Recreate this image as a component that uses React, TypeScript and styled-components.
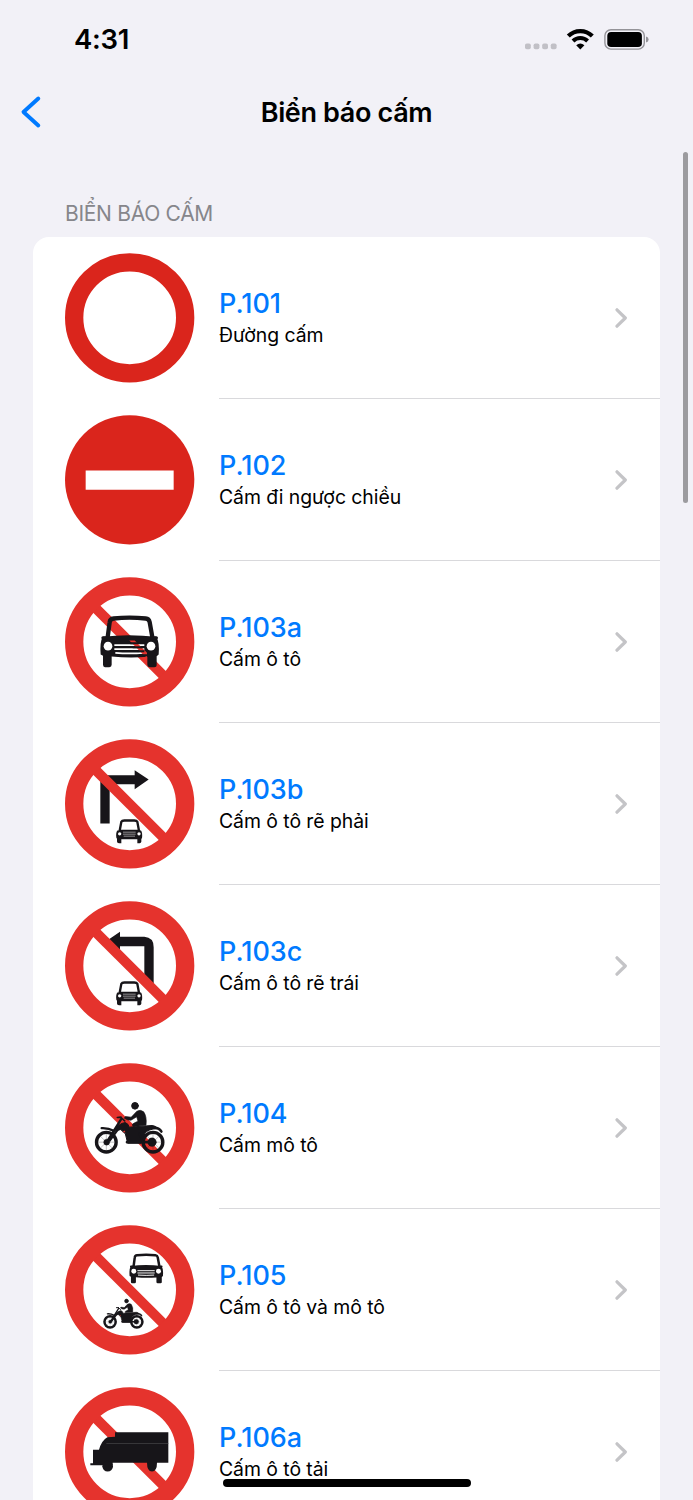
import React from "react";
import styled, { createGlobalStyle } from "styled-components";

const GlobalStyle = createGlobalStyle`
  * { box-sizing: border-box; }
  body { margin: 0; background: #f2f1f7; font-family: Inter, "Liberation Sans", sans-serif; color: #000; }
`;

const Screen = styled.main`
  position: relative;
  width: 693px;
  height: 1500px;
  overflow: hidden;
  background: #f2f1f7;
`;

const StatusBar = styled.header`
  display: flex;
  align-items: center;
  justify-content: space-between;
  height: 78px;
  padding: 0 44px 0 74px;
`;

const Time = styled.span`
  font-size: 27.5px;
  font-weight: 600;
  line-height: 34px;
  letter-spacing: -0.3px;
`;

const NavBar = styled.nav`
  display: grid;
  grid-template-columns: 60px 1fr 60px;
  align-items: center;
  height: 68px;
`;

const BackButton = styled.button`
  display: flex;
  padding: 0 0 0 20px;
  border: 0;
  background: none;
`;

const Title = styled.h1`
  margin: 0;
  padding-top: 2px;
  font-size: 27px;
  font-weight: 600;
  line-height: 34px;
  letter-spacing: -0.35px;
  text-align: center;
`;

const SectionTitle = styled.h2`
  margin: 0;
  height: 91px;
  padding: 55px 0 0 65px;
  font-size: 21px;
  font-weight: 400;
  line-height: 26px;
  letter-spacing: -0.3px;
  color: #86868b;
`;

const Card = styled.ul`
  list-style: none;
  margin: 0 33px;
  padding: 0;
  background: #fff;
  border-radius: 16px 16px 0 0;
`;

const Row = styled.li`
  display: flex;
  align-items: center;
  height: 162px;
  padding-left: 32px;
`;

const RowBody = styled.div`
  display: flex;
  flex: 1;
  align-items: center;
  justify-content: space-between;
  height: 162px;
  margin-left: 24px;
  padding-right: 31px;
  border-bottom: 1px solid #d9d9dc;
`;

const Labels = styled.div`
  display: flex;
  flex-direction: column;
  padding-top: 1px;
`;

const Code = styled.span`
  font-size: 27px;
  font-weight: 500;
  line-height: 34px;
  letter-spacing: 0;
  color: #007aff;
`;

const Description = styled.span`
  font-size: 19.4px;
  line-height: 28px;
  letter-spacing: -0.05px;
`;

const ScrollThumb = styled.div`
  position: absolute;
  top: 152px;
  right: 5px;
  width: 5px;
  height: 351px;
  border-radius: 3px;
  background: #9c9b9f;
`;

const HomeIndicator = styled.div`
  position: absolute;
  top: 1479px;
  left: 223px;
  width: 248px;
  height: 8px;
  border-radius: 4px;
  background: #000;
`;

const INK = "#171519";
const RED = "#e5332d";

function Car() {
  return (
    <g>
      <path d="M158 210 L164 165 Q165 155 176 154 Q223 149 272 154 Q282 155 284 165 L292 210" fill="none" stroke={INK} strokeWidth="13" />
      <path fill={INK} d="M143 209 Q220 200 304 209 Q314 226 311 262 L305 267 V294 Q305 300 298 300 H284 Q277 300 277 293 V269 Q224 274 170 268 V293 Q170 300 163 300 H150 Q144 300 144 293 V266 L137 262 Q134 226 143 209Z" />
      <path d="M144 212 H155 M290 212 H304" stroke={INK} strokeWidth="10" strokeLinecap="round" />
      <circle cx="159" cy="237" r="13" fill="#fff" />
      <circle cx="288" cy="237" r="13" fill="#fff" />
      <path d="M178 234 H268 M178 246 H268 M181 257 Q224 260 265 257" stroke="#fff" strokeWidth="5" fill="none" />
    </g>
  );
}

const GrilleStripe = () => (
  <path d="M223 220 H239 L276 257 V272 L262 260 Z" fill={RED} />
);

const GrilleBars = () => (
  <path d="M226 228 H250 M233 240 H263 M247 252 H268 M252 264 H277" stroke={INK} strokeWidth="6" />
);

function SmallCar() {
  return (
    <g>
      <path d="M194 305 L199 278 Q201 274 208 274 H238 Q245 274 247 278 L252 305Z" fill="#fff" stroke={INK} strokeWidth="7" />
      <path fill={INK} d="M187 304 H258 Q263 311 261 327 L259 329 V338 Q258 342 254 342 H247 V330 H199 V342 H192 Q186 342 186 337 V329 L184 326 Q182 311 187 304Z" />
      <circle cx="194" cy="314" r="5" fill="#fff" />
      <circle cx="252" cy="314" r="5" fill="#fff" />
      <path d="M204 309 H242 M204 315 H242 M206 321 H240" stroke="#bdbdbd" strokeWidth="2.2" />
    </g>
  );
}

function Motorbike({ heavy = false }: { heavy?: boolean }) {
  return (
    <g fill="none" stroke={INK} strokeLinecap="round" strokeLinejoin="round">
      <circle cx="154" cy="267" r="29.5" strokeWidth={heavy ? 13 : 10} />
      <circle cx="294" cy="267" r="29.5" strokeWidth={heavy ? 13 : 10} />
      <g strokeWidth="1.5" opacity=".5">
        <path d="M154 240 V294 M127 267 H181 M135 248 L173 286 M173 248 L135 286" />
        <path d="M294 240 V294 M267 267 H321 M275 248 L313 286 M313 248 L275 286" />
      </g>
      <circle cx="155" cy="267" r="9" fill={INK} />
      <circle cx="291" cy="267" r="13" fill={INK} />
      <path d="M140 225 Q160 224 176 233" strokeWidth="7" />
      <path d="M155 267 L199 197 M164 262 L190 227" strokeWidth="7" />
      <path d="M187 193 L198 192 M198 193 L209 203" strokeWidth="5" />
      <path d="M177 233 Q190 211 211 208 Q222 213 222 222 L291 217 Q304 218 306 226 Q280 228 270 240 L259 270 H218 L211 242 L198 230Z" fill={INK} strokeWidth="3" />
      <path d="M202 237 H211 L209 232Z" fill={RED} stroke="none" />
      <path d="M246 174 Q257 168 266 176 Q276 190 273 216 L234 220 Q228 213 239 209 L249 204 L245 191 L228 201 Q218 202 208 195 L211 190 L228 192Z" fill={INK} strokeWidth="2" />
      <circle cx="240" cy="158" r="10" fill={INK} strokeWidth="3" />
      <path d="M282 224 Q312 220 319 235 M216 267 H289" strokeWidth="8" />
      <path d="M252 240 L270 282" strokeWidth="5" />
    </g>
  );
}

function Truck() {
  return (
    <g>
      <path fill={INK} d="M180 165 H340 V257 H306 Q306 283 291 283 Q276 283 276 257 H173 V264 H106 V258 H114 V218 H132 Q139 190 157 180 L180 179Z" />
      <path d="M154 199 H340" stroke="#49474a" strokeWidth="2" />
      <circle cx="158" cy="267" r="16" fill={INK} />
    </g>
  );
}

type SignKind = "road" | "entry" | "car" | "right" | "left" | "moto" | "both" | "truck";

const Ring = () => (
  <circle cx="224" cy="224" r="166.5" fill="none" stroke={RED} strokeWidth="55" />
);

const Slash = () => <path d="M110 111 L337 337" stroke={RED} strokeWidth="30" />;

function Sign({ kind }: { kind: SignKind }) {
  return (
    <svg width="130" height="130" viewBox="30 29.5 390 390" aria-hidden="true">
      {kind === "road" && <circle cx="224" cy="224" r="166.5" fill="none" stroke="#da251c" strokeWidth="55" />}
      {kind === "entry" && (
        <>
          <circle cx="224" cy="224" r="194" fill="#da251c" />
          <path d="M92 196 H356 V254 H92Z" fill="#fff" />
        </>
      )}
      {kind === "car" && (<><Slash /><Car /><GrilleStripe /><GrilleBars /><Ring /></>)}
      {kind === "right" && (
        <>
          <path d="M136 283 V138 H239 V123 L281 151 L239 180 V165 H164 V283Z" fill={INK} />
          <SmallCar /><Slash /><Ring />
        </>
      )}
      {kind === "left" && (
        <>
          <path d="M161 145 L195 122 V137 H268 Q296 139 296 168 V283 H268 V165 H195 V180Z" fill={INK} />
          <SmallCar /><Slash /><Ring />
        </>
      )}
      {kind === "moto" && (<><Slash /><Motorbike /><Ring /></>)}
      {kind === "both" && (
        <>
          <Slash />
          <g transform="translate(145 32) scale(.575)"><Car /></g>
          <g transform="translate(77 167) scale(.573)"><Motorbike heavy /></g>
          <Ring />
        </>
      )}
      {kind === "truck" && (<><Slash /><Truck /><Ring /></>)}
    </svg>
  );
}

const Chevron = () => (
  <svg width="14" height="22" viewBox="0 0 14 22" fill="none" aria-hidden="true">
    <path d="M2 2.8 L10.3 11 L2 19.2" stroke="#c4c4c7" strokeWidth="3.2" strokeLinecap="round" strokeLinejoin="round" />
  </svg>
);

const StatusIcons = () => (
  <svg width="124" height="26" viewBox="525 26 124 26" aria-hidden="true">
    <g fill="#c1c0c6">
      <rect x="525" y="43.5" width="5.8" height="5.8" rx="1.8" />
      <rect x="533.6" y="43.5" width="5.8" height="5.8" rx="1.8" />
      <rect x="542.2" y="43.5" width="5.8" height="5.8" rx="1.8" />
      <rect x="550.8" y="43.5" width="5.8" height="5.8" rx="1.8" />
    </g>
    <path d="M568.3 36 A17 17 0 0 1 592.3 36" fill="none" stroke="#000" strokeWidth="4.2" />
    <path d="M573 41 A10.4 10.4 0 0 1 587.6 41" fill="none" stroke="#000" strokeWidth="4" />
    <path d="M576.2 45.2 Q580.3 41.6 584.4 45.2 L580.3 49.5Z" />
    <rect x="604.9" y="29.7" width="39.4" height="19.4" rx="6" fill="none" stroke="#949398" strokeWidth="1.4" />
    <rect x="607.3" y="32" width="34.6" height="15" rx="3.8" />
    <path d="M646 36.5 Q648.6 37.2 648.6 39.4 Q648.6 41.6 646 42.5Z" fill="#949398" />
  </svg>
);

const SIGNS: { kind: SignKind; code: string; text: string }[] = [
  { kind: "road", code: "P.101", text: "Đường cấm" },
  { kind: "entry", code: "P.102", text: "Cấm đi ngược chiều" },
  { kind: "car", code: "P.103a", text: "Cấm ô tô" },
  { kind: "right", code: "P.103b", text: "Cấm ô tô rẽ phải" },
  { kind: "left", code: "P.103c", text: "Cấm ô tô rẽ trái" },
  { kind: "moto", code: "P.104", text: "Cấm mô tô" },
  { kind: "both", code: "P.105", text: "Cấm ô tô và mô tô" },
  { kind: "truck", code: "P.106a", text: "Cấm ô tô tải" },
];

export default function App() {
  return (
    <Screen>
      <GlobalStyle />
      <StatusBar>
        <Time>4:31</Time>
        <StatusIcons />
      </StatusBar>
      <NavBar>
        <BackButton aria-label="Back">
          <svg width="22" height="34" viewBox="0 0 22 34" fill="none">
            <path d="M18.3 3.5 L3.5 17 L18.3 30.5" stroke="#007aff" strokeWidth="3.9" strokeLinecap="round" strokeLinejoin="round" />
          </svg>
        </BackButton>
        <Title>Biển báo cấm</Title>
      </NavBar>
      <SectionTitle>BIỂN BÁO CẤM</SectionTitle>
      <Card>
        {SIGNS.map((s) => (
          <Row key={s.code}>
            <Sign kind={s.kind} />
            <RowBody>
              <Labels>
                <Code>{s.code}</Code>
                <Description>{s.text}</Description>
              </Labels>
              <Chevron />
            </RowBody>
          </Row>
        ))}
      </Card>
      <ScrollThumb />
      <HomeIndicator />
    </Screen>
  );
}
